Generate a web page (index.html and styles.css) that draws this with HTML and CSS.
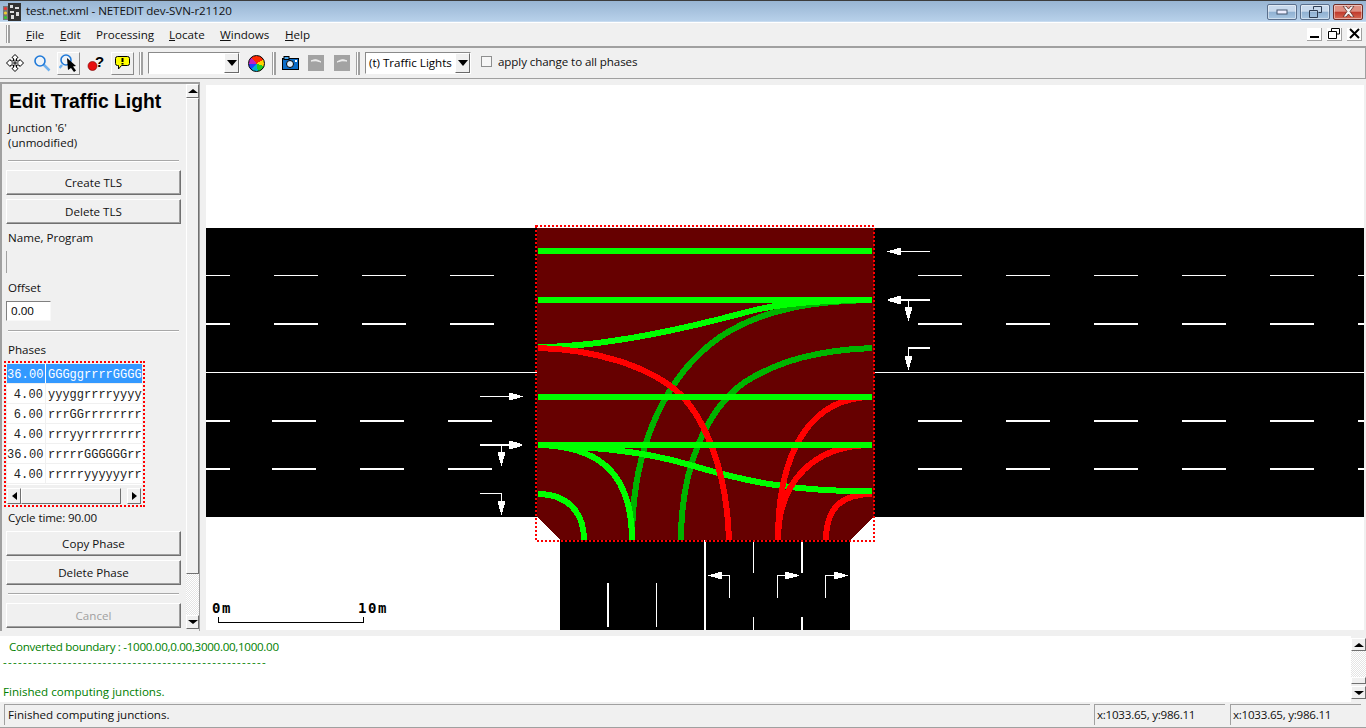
FILE: index.html
```html
<!DOCTYPE html>
<html lang="en">
<head>
<meta charset="utf-8">
<title>test.net.xml - NETEDIT dev-SVN-r21120</title>
<link rel="stylesheet" href="styles.css">
</head>
<body>
<div class="app">
  <header class="titlebar">
    <svg class="appicon" width="18" height="18" viewBox="0 0 18 18">
      <rect x="5" y="0" width="13" height="18" class="ai-dark"/>
      <path d="M7 2h3v3h-3zM12 4h4v2h-4zM7 8h4v2h-4zM13 9h3v4h-3zM8 12h3v4h-3z" class="ai-light"/>
      <rect x="0" y="3" width="5" height="14" class="ai-pole"/>
      <circle cx="2.5" cy="5.5" r="1.6" class="ai-r"/>
      <circle cx="2.5" cy="10" r="1.6" class="ai-y"/>
      <circle cx="2.5" cy="14.5" r="1.6" class="ai-g"/>
    </svg>
    <span class="titletext">test.net.xml - NETEDIT dev-SVN-r21120</span>
    <div class="wincontrols">
      <div class="winbtn"><svg width="12" height="6" viewBox="0 0 12 6"><rect x="1" y="1" width="10" height="4" class="wi-fill"/></svg></div>
      <div class="winbtn"><svg width="13" height="12" viewBox="0 0 13 12"><path d="M4.5 3.5v-3h8v6h-3M.5 4.500h8v7h-8z" class="wi-line"/></svg></div>
      <div class="winbtn close"><svg width="15" height="11" viewBox="0 0 15 11"><path d="M2 0h3l2.500 3 2.500-3h3l-4 5.500 4 5.500h-3l-2.500-3-2.500 3h-3l4-5.500z" class="wi-x"/></svg></div>
    </div>
  </header>

  <nav class="menubar">
    <span class="grip grip-menu"></span>
    <span class="menu m-file"><u>F</u>ile</span>
    <span class="menu m-edit"><u>E</u>dit</span>
    <span class="menu m-proc">Processing</span>
    <span class="menu m-loc"><u>L</u>ocate</span>
    <span class="menu m-win"><u>W</u>indows</span>
    <span class="menu m-help"><u>H</u>elp</span>
    <div class="mdi">
      <div class="mdibtn"><svg width="11" height="11" viewBox="0 0 11 11"><rect x="1" y="8" width="9" height="2"/></svg></div>
      <div class="mdibtn"><svg width="12" height="11" viewBox="0 0 12 11"><path d="M3.500 3v-2.500h8v5.500h-3M.5 3.500h8v7h-8z" class="mi-line"/></svg></div>
      <div class="mdibtn"><svg width="11" height="11" viewBox="0 0 11 11"><path d="M1 1l9 9M10 1l-9 9" class="mi-x"/></svg></div>
    </div>
  </nav>

  <div class="toolbar">
    <div class="tool">
      <svg width="18" height="18" viewBox="0 0 18 18"><path d="M9 .5l3 3-1.500 1v2.500l2.500 0 1-1.500 3.500 3.500-3.500 3.500-1-1.500h-2.500v2.500l1.500 1-3 3-3-3 1.500-1v-2.500h-2.500l-1 1.500-3.500-3.500 3.500-3.500 1 1.500h2.500v-2.500l-1.500-1z" class="ic-move"/><path d="M9 5.500v7M5.500 9h7" class="ic-movein"/></svg>
    </div>
    <div class="tool">
      <svg width="18" height="18" viewBox="0 0 18 18"><line x1="10.500" y1="10.500" x2="16.500" y2="16.500" class="ic-handle"/><circle cx="7" cy="7" r="5" class="ic-lens"/></svg>
    </div>
    <div class="tool raised">
      <svg width="19" height="19" viewBox="0 0 19 19"><line x1="3" y1="11" x2="0.500" y2="14" class="ic-handle"/><circle cx="7" cy="6" r="5" class="ic-lens"/><path d="M8 4l9 8-3 .5 3 4-2 1.500-3-4-3 2z" class="ic-cursor"/></svg>
    </div>
    <div class="tool">
      <svg width="18" height="16" viewBox="0 0 18 16"><circle cx="5.500" cy="11" r="4.500" class="ic-bomb"/><text x="8" y="11.500" class="ic-q">?</text></svg>
    </div>
    <div class="tool raised">
      <svg width="15" height="14" viewBox="0 0 15 14"><path d="M2.500 .5h10a2 2 0 0 1 2 2v5a2 2 0 0 1-2 2h-6l-3 3.500v-3.500h-1a2 2 0 0 1-2-2v-5a2 2 0 0 1 2-2z" class="ic-bubble"/><rect x="6.500" y="2" width="2" height="4"/><rect x="6.500" y="7" width="2" height="1.500"/></svg>
    </div>
    <span class="grip grip-a"></span>
    <div class="combo combo-a"><span class="combo-text"></span><span class="combo-btn"><i class="tri"></i></span></div>
    <div class="tool tool-wheel"><span class="wheel"></span></div>
    <span class="grip grip-b"></span>
    <div class="tool tool-cam">
      <svg width="17" height="14" viewBox="0 0 17 14"><rect x=".5" y="2.500" width="16" height="11" class="ic-cam"/><rect x="2" y="0.500" width="5" height="3" class="ic-cam2"/><circle cx="8" cy="8" r="3.500" class="ic-camlens"/><rect x="13" y="4" width="2" height="2" class="ic-camdot"/></svg>
    </div>
    <div class="tool tool-g1"><svg width="16" height="16" viewBox="0 0 16 16"><rect width="16" height="16" class="ic-gray"/><path d="M3 6q5-3 10 1q-5-2-10-1z" class="ic-arc"/></svg></div>
    <div class="tool tool-g2"><svg width="16" height="16" viewBox="0 0 16 16"><rect width="16" height="16" class="ic-gray"/><path d="M3 7q5-4 10-1q-5-1-10 1z" class="ic-arc"/></svg></div>
    <span class="grip grip-c"></span>
    <div class="combo combo-b"><span class="combo-text">(t) Traffic Lights</span><span class="combo-btn"><i class="tri"></i></span></div>
    <span class="check"></span>
    <span class="checklabel">apply change to all phases</span>
  </div>

  <main class="main">
    <aside class="panel">
      <div class="panel-body">
        <h1 class="ptitle">Edit Traffic Light</h1>
        <div class="ptext t-junction">Junction '6'</div>
        <div class="ptext">(unmodified)</div>
        <div class="psep s-1"></div>
        <div class="btn b-create">Create TLS</div>
        <div class="btn b-next">Delete TLS</div>
        <div class="ptext t-name">Name, Program</div>
        <div class="thininput"></div>
        <div class="ptext t-offset">Offset</div>
        <div class="offset">0.00</div>
        <div class="psep s-2"></div>
        <div class="ptext t-phases">Phases</div>
        <div class="phases">
          <div class="ptable">
            <div class="prow sel"><span class="pt">36.00</span><span class="ps">GGGggrrrrGGGGG</span></div>
            <div class="prow"><span class="pt">4.00</span><span class="ps">yyyggrrrryyyyy</span></div>
            <div class="prow"><span class="pt">6.00</span><span class="ps">rrrGGrrrrrrrrr</span></div>
            <div class="prow"><span class="pt">4.00</span><span class="ps">rrryyrrrrrrrrr</span></div>
            <div class="prow"><span class="pt">36.00</span><span class="ps">rrrrrGGGGGGrrr</span></div>
            <div class="prow"><span class="pt">4.00</span><span class="ps">rrrrryyyyyyrrr</span></div>
          </div>
          <div class="hscroll">
            <span class="sbtn"><i class="tri-l"></i></span>
            <span class="hthumb"></span>
            <span class="sbtn sbtn-r"><i class="tri-r"></i></span>
          </div>
        </div>
        <div class="ptext t-cycle">Cycle time: 90.00</div>
        <div class="btn b-copy">Copy Phase</div>
        <div class="btn b-next">Delete Phase</div>
        <div class="psep s-3"></div>
        <div class="btn b-cancel">Cancel</div>
      </div>
      <div class="vscroll">
        <span class="sbtn vbtn"><i class="tri-u"></i></span>
        <span class="vthumb"></span>
        <span class="vtrack"></span>
        <span class="sbtn vbtn"><i class="tri-d"></i></span>
      </div>
    </aside>

    <div class="canvas">
      <svg class="net" width="1158" height="545" viewBox="206 85 1158 545">
        <rect x="206" y="228" width="1158" height="289" class="road"/>
        <rect x="560" y="517" width="290" height="113" class="road"/>

        <g class="mark">
          <rect x="206" y="372" width="1158" height="1"/>
          <path d="M206 275h24v1h-24zM274 275h44v1h-44zM362 275h44v1h-44zM450 275h44v1h-44z"/>
          <path d="M206 323h24v2h-24zM274 323h44v2h-44zM362 323h44v2h-44zM450 323h44v2h-44z"/>
          <path d="M206 420h24v2h-24zM272 420h44v2h-44zM360 420h44v2h-44zM448 420h44v2h-44z"/>
          <path d="M206 468h24v2h-24zM272 468h44v2h-44zM360 468h44v2h-44zM448 468h44v2h-44z"/>
          <path d="M918 275h44v1h-44zM1006 275h44v1h-44zM1094 275h44v1h-44zM1182 275h44v1h-44zM1270 275h44v1h-44zM1358 275h6v1h-6z"/>
          <path d="M918 323h44v2h-44zM1006 323h44v2h-44zM1094 323h44v2h-44zM1182 323h44v2h-44zM1270 323h44v2h-44zM1358 323h6v2h-6z"/>
          <path d="M918 420h44v2h-44zM1006 420h44v2h-44zM1094 420h44v2h-44zM1182 420h44v2h-44zM1270 420h44v2h-44zM1358 420h6v2h-6z"/>
          <path d="M918 468h44v2h-44zM1006 468h44v2h-44zM1094 468h44v2h-44zM1182 468h44v2h-44zM1270 468h44v2h-44zM1358 468h6v2h-6z"/>
          <rect x="704" y="539" width="2" height="91"/>
          <rect x="607" y="583" width="2" height="44"/>
          <rect x="656" y="583" width="1" height="44"/>
          <path d="M753 539h1v34h-1zM753 617h1v13h-1zM801 539h2v34h-2zM801 617h2v13h-2z"/>
        </g>

        <polygon points="537,228 874,228 874,517 850,540 560,540 537,517" class="junction"/>

        <g class="lane">
          <path class="dg" d="M872 300C820 301 765 307 720 337C670 372 632 440 632 540"/>
          <path class="dg" d="M872 348C820 350 780 360 745 382C705 410 681 470 681 540"/>
          <path class="rd" d="M872 494C845 494 826 505 826 540"/>
          <path class="lg" d="M538 445C590 446 632 465 632 540"/>
          <path class="lg" d="M538 347C600 347 680 330 747 312C780 303 820 300 872 300"/>
          <path class="lg" d="M538 445C590 447 640 450 690 465C740 480 790 492 872 491"/>
          <path class="lg" d="M538 494C565 494 584 510 584 540"/>
          <path class="rd" d="M538 348C590 349 650 365 681 395C705 420 727 470 729 540"/>
          <path class="rd" d="M872 397C815 397 778 445 778 540"/>
          <path class="rd" d="M872 445C815 445 778 480 778 540"/>
          <rect x="538" y="248" width="334" height="6" class="lg-f"/>
          <rect x="538" y="297" width="334" height="6" class="lg-f"/>
          <rect x="538" y="394" width="334" height="6" class="lg-f"/>
          <rect x="538" y="442" width="334" height="6" class="lg-f"/>
        </g>

        <rect x="536" y="226" width="338" height="315" class="tlsbox"/>

        <g class="arrows">
          <rect x="480" y="396" width="43" height="1"/>
          <polygon points="509,393 513,393 513,394 520,395 520,398 513,399 513,400 509,400"/>
          <rect x="480" y="444" width="42" height="2"/>
          <polygon points="509,441 513,441 513,442 520,443 520,447 513,448 513,449 509,449"/>
          <rect x="501" y="445" width="1" height="21"/>
          <polygon points="498,452 505,452 505,456 504,456 503,463 500,463 499,456 498,456"/>
          <path d="M480 493h22v22h-1v-21h-21z"/>
          <polygon points="498,501 505,501 505,505 504,505 503,512 500,512 499,505 498,505"/>

          <rect x="887" y="251" width="43" height="1"/>
          <polygon points="901,248 897,248 897,249 890,250 890,253 897,254 897,255 901,255"/>
          <rect x="888" y="299" width="42" height="2"/>
          <polygon points="901,296 897,296 897,297 890,298 890,302 897,303 897,304 901,304"/>
          <rect x="908" y="300" width="1" height="21"/>
          <polygon points="905,307 912,307 912,311 911,311 910,318 907,318 906,311 905,311"/>
          <path d="M908 347h22v2h-21v21h-1z"/>
          <polygon points="905,356 912,356 912,360 911,360 910,367 907,367 906,360 905,360"/>

          <path d="M708 575h22v23h-1v-22h-21z"/>
          <polygon points="722,572 718,572 718,573 711,574 711,577 718,578 718,579 722,579"/>
          <path d="M777 575h22v1h-21v22h-1z"/>
          <polygon points="785,572 789,572 789,573 797,574 797,577 789,578 789,579 785,579"/>
          <path d="M825 575h23v1h-22v22h-1z"/>
          <polygon points="834,572 838,572 838,573 845,574 845,577 838,578 838,579 834,579"/>
        </g>

        <path d="M218.500 617v5.500h145v-5.500" class="scale"/>
        <text x="212" y="613" class="scaletext">0m</text>
        <text x="358" y="613" class="scaletext">10m</text>
      </svg>
    </div>
  </main>

  <section class="log">
    <div class="logtext">
      <div class="logline indent">Converted boundary : -1000.00,0.00,3000.00,1000.00</div>
      <div class="logline dashes">-----------------------------------------------------</div>
      <div class="logline">&nbsp;</div>
      <div class="logline">Finished computing junctions.</div>
    </div>
    <div class="logscroll">
      <span class="sbtn lbtn"><i class="tri-u"></i></span>
      <span class="ltrack"></span>
      <span class="lthumb"></span>
      <span class="sbtn lbtn"><i class="tri-d"></i></span>
    </div>
  </section>

  <footer class="statusbar">
    <div class="pane pane-main">Finished computing junctions.</div>
    <div class="pane pane-a">x:1033.65, y:986.11</div>
    <div class="pane pane-b">x:1033.65, y:986.11</div>
  </footer>
</div>
</body>
</html>
```
FILE: styles.css
```css
* { box-sizing: border-box; }
html, body { margin: 0; padding: 0; }
body { background: #f0f0f0; font-family: "Open Sans", "Noto Sans", sans-serif; font-size: 11.6px; color: #000; overflow: hidden; }
.app { width: 1366px; height: 728px; display: flex; flex-direction: column; overflow: hidden; }

/* title bar */
.titlebar { height: 22px; display: flex; align-items: center; padding-left: 3px; border-top: 1px solid #3c3c3c; background: linear-gradient(#98b5d3, #b9d2eb); box-shadow: inset 0 -1px 0 #c8dcf0; }
.appicon { flex: none; }
.ai-dark { fill: #333; } .ai-light { fill: #ddd; } .ai-pole { fill: #777; }
.ai-r { fill: #e33; } .ai-y { fill: #ec3; } .ai-g { fill: #3c3; }
.titletext { margin: 0 0 2px 5px; font-size: 11.6px; letter-spacing: -.1px; color: #111; white-space: nowrap; }
.wincontrols { margin-left: auto; display: flex; gap: 3px; padding-right: 3px; height: 16px; }
.winbtn { width: 30px; height: 16px; border: 1px solid #5a6f8c; border-radius: 2px; display: flex; align-items: center; justify-content: center; background: linear-gradient(#c8d9ec 0 45%, #8fb0d1 50%, #a8c6e2); box-shadow: inset 0 0 0 1px rgba(255,255,255,.45); }
.winbtn.close { border-color: #6e2e28; background: linear-gradient(#de8f82 0 45%, #c0392b 50%, #d66a55); }
.wi-fill { fill: #eef; stroke: #45566f; stroke-width: 1; }
.wi-line { fill: none; stroke: #2f3d52; stroke-width: 1; }
.wi-x { fill: #f4f4f4; stroke: #5c2a25; stroke-width: .8; }

/* menu bar */
.menubar { height: 24px; display: flex; align-items: center; padding-left: 6px; box-shadow: inset 0 1px 0 #fff; }
.grip { display: block; width: 4px; border-left: 1px solid #a0a0a0; border-right: 2px solid #a0a0a0; background: #fff; flex: none; }
.grip-menu { height: 18px; margin-right: 16px; }
.menu { white-space: nowrap; color: #111; margin-top: 1px; flex: none; }
.m-file { width: 34px; } .m-edit { width: 36px; } .m-proc { width: 73px; } .m-loc { width: 51px; } .m-win { width: 65px; }
.mdi { margin-left: auto; display: flex; gap: 5px; padding-right: 4px; }
.mdibtn { width: 15px; height: 13px; display: flex; align-items: center; justify-content: center; background: #fff; border-right: 1px solid #a0a0a0; border-bottom: 1px solid #a0a0a0; }
.mi-line { fill: none; stroke: #000; stroke-width: 1; }
.mi-x { stroke: #000; stroke-width: 2; fill: none; }

/* tool bar */
.toolbar { height: 33px; display: flex; align-items: center; padding-left: 3px; border-top: 2px solid #a0a0a0; border-bottom: 1px solid #a0a0a0; border-right: 1px solid #a0a0a0; }
.tool { width: 23px; height: 23px; margin-right: 4px; display: flex; align-items: center; justify-content: center; flex: none; }
.tool.raised { border: 1px solid; border-color: #fff #8a8a8a #8a8a8a #fff; }
.grip-a { height: 23px; margin-left: 1px; }
.grip-b { height: 23px; }
.grip-c { height: 23px; }
.combo { height: 22px; display: flex; background: #fff; border: 1px solid; border-color: #8a8a8a #fff #fff #8a8a8a; flex: none; }
.combo-a { width: 92px; margin-left: 5px; }
.combo-b { width: 106px; margin-left: 5px; }
.combo-text { flex: 1; padding: 2px 0 0 3px; white-space: nowrap; overflow: hidden; }
.combo-btn { width: 15px; display: flex; align-items: center; justify-content: center; background: #f0f0f0; border: 1px solid; border-color: #fff #6a6a6a #6a6a6a #fff; }
.tri { width: 0; height: 0; border: 5px solid transparent; border-top: 6px solid #000; border-bottom: 0; }
.tool-wheel { margin-left: 5px; margin-right: 4px; }
.wheel { display: block; width: 17px; height: 17px; border-radius: 50%; border: 1px solid #000; background: conic-gradient(#ff2a00 0 60deg, #ffd400 60deg 110deg, #22cc22 110deg 170deg, #00b0d0 170deg 220deg, #2040ff 220deg 270deg, #c020c0 270deg 320deg, #ff2a00 320deg); }
.tool-cam { margin-left: 3px; margin-right: 2px; }
.tool-g1 { margin-right: 3px; }
.tool-g2 { margin-right: 3px; }
.ic-move { fill: #fff; stroke: #000; stroke-width: 1; }
.ic-movein { fill: none; stroke: #000; stroke-width: 1; }
.ic-handle { stroke: #6fb0ee; stroke-width: 2.5; }
.ic-lens { fill: #eef3f8; stroke: #1f79d8; stroke-width: 1.6; }
.ic-cursor { fill: #000; }
.ic-bomb { fill: #e81010; stroke: #700; stroke-width: .6; }
.ic-q { font-family: "Liberation Sans", sans-serif; font-weight: 700; font-size: 15px; fill: #000; }
.ic-bubble { fill: #ffff00; stroke: #000; stroke-width: 1; }
.ic-cam { fill: #0a6cc8; stroke: #000; stroke-width: 1; }
.ic-cam2 { fill: #4aa8ee; stroke: #000; stroke-width: 1; }
.ic-camlens { fill: #dff0ff; stroke: #000; stroke-width: 1; }
.ic-camdot { fill: #fff; }
.ic-gray { fill: #a3a3a3; }
.ic-arc { fill: #eee; stroke: #eee; stroke-width: 1; }
.check { width: 11px; height: 11px; margin-left: 10px; border: 1px solid #8e8f8f; background: #f6f6f6; flex: none; margin-top: -3px; }
.checklabel { margin-left: 6px; white-space: nowrap; margin-top: -3px; color: #111; letter-spacing: -.1px; }

/* main */
.main { height: 557px; display: flex; align-items: flex-start; padding-top: 3px; flex: none; }
.panel { width: 200px; height: 549px; display: flex; border-top: 2px solid #a0a0a0; border-left: 2px solid #a0a0a0; border-right: 1px solid #a0a0a0; flex: none; }
.panel-body { width: 184px; padding-left: 4px; flex: none; }
.ptitle { margin: 6px 0 0 3px; font-family: "Liberation Sans", sans-serif; font-size: 19.3px; line-height: 24px; font-weight: 700; white-space: nowrap; }
.ptext { line-height: 15px; padding-left: 2px; white-space: nowrap; color: #111; }
.t-junction { margin-top: 6px; }
.psep { width: 171px; height: 2px; margin-left: 2px; background: #a8a8a8; border-bottom: 1px solid #fff; }
.s-1 { margin-top: 10px; }
.s-2 { margin-top: 9px; }
.s-3 { margin-top: 8px; }
.btn { width: 175px; height: 25px; line-height: 23px; text-align: center; background: #f0f0f0; border: 1px solid; border-color: #fff #707070 #707070 #fff; box-shadow: inset -1px -1px 0 #a0a0a0; color: #111; }
.b-create { margin-top: 8px; }
.b-next { margin-top: 4px; }
.t-name { margin-top: 6px; }
.thininput { width: 1px; height: 22px; margin-top: 6px; background: #a0a0a0; }
.t-offset { margin-top: 7px; }
.offset { width: 45px; height: 20px; margin-top: 6px; padding-left: 4px; line-height: 18px; background: #fff; border: 1px solid; border-color: #808080 #f8f8f8 #f8f8f8 #808080; }
.t-phases { margin-top: 10px; }
.phases { width: 141px; height: 146px; margin: 4px 0 0 -2px; padding: 3px; background:
  repeating-linear-gradient(90deg, #f00 0 2px, transparent 2px 4px) 0 0 / 100% 2px no-repeat,
  repeating-linear-gradient(90deg, #f00 0 2px, transparent 2px 4px) 0 100% / 100% 2px no-repeat,
  repeating-linear-gradient(0deg, #f00 0 2px, transparent 2px 4px) 0 0 / 2px 100% no-repeat,
  repeating-linear-gradient(0deg, #f00 0 2px, transparent 2px 4px) 100% 0 / 2px 100% no-repeat; }
.ptable { height: 121px; background: #fff; }
.prow { height: 20px; display: flex; font-family: "Liberation Mono", monospace; font-size: 12px; line-height: 23px; border-bottom: 1px solid #f0f0f0; color: #222; }
.pt { width: 39px; padding-right: 2px; text-align: right; border-right: 1px solid #f0f0f0; flex: none; letter-spacing: .1px; }
.ps { padding-left: 2px; overflow: hidden; white-space: nowrap; flex: 1; }
.prow.sel { color: #fff; }
.prow.sel .pt, .prow.sel .ps { background: #3399ff; }
.prow.sel .pt { border-right-color: #fff; }
.hscroll { height: 16px; margin-top: 3px; display: flex; }
.sbtn { display: flex; align-items: center; justify-content: center; background: #f0f0f0; border: 1px solid; border-color: #fff #707070 #707070 #fff; flex: none; }
.hscroll .sbtn { width: 14px; }
.sbtn-r { margin-left: 6px; }
.hthumb { width: 100px; background: #f0f0f0; border: 1px solid; border-color: #fff #707070 #707070 #fff; }
.tri-l { border: 4px solid transparent; border-right: 5px solid #000; border-left: 0; }
.tri-r { border: 4px solid transparent; border-left: 5px solid #000; border-right: 0; }
.tri-u { border: 5px solid transparent; border-bottom: 4px solid #000; border-top: 0; }
.tri-d { border: 5px solid transparent; border-top: 4px solid #000; border-bottom: 0; }
.t-cycle { margin-top: 3px; letter-spacing: -.12px; }
.b-copy { margin-top: 6px; }
.b-cancel { margin-top: 8px; color: #a0a0a0; }
.vscroll { width: 13px; display: flex; flex-direction: column; flex: none; }
.vbtn { height: 14px; }
.vthumb { height: 476px; background: #f0f0f0; border: 1px solid; border-color: #fff #707070 #707070 #fff; }
.vtrack { height: 41px; background: repeating-conic-gradient(#e4e4e4 0 25%, #fff 0 50%) 0 0 / 2px 2px; }
.canvas { width: 1158px; height: 545px; margin: 3px 0 0 6px; background: #fff; flex: none; overflow: hidden; }
.net { display: block; shape-rendering: crispEdges; }
.road { fill: #000; }
.mark { fill: #fff; }
.junction { fill: #660000; }
.lane path { fill: none; stroke-width: 6; }
.dg { stroke: #00b300; }
.lg { stroke: #00ff00; }
.rd { stroke: #ff0000; }
.lg-f { fill: #00ff00; }
.tlsbox { fill: none; stroke: #ff0000; stroke-width: 2; stroke-dasharray: 2 2; }
.arrows { fill: #fff; }
.scale { fill: none; stroke: #000; stroke-width: 1; }
.scaletext { font-family: "DejaVu Sans Mono", monospace; font-weight: 700; font-size: 14px; letter-spacing: 1.6px; fill: #000; }

/* log */
.log { height: 66px; display: flex; flex: none; }
.logtext { width: 1351px; height: 66px; background: #fff; padding: 3px 0 0 3px; overflow: hidden; color: #008000; flex: none; }
.logline { line-height: 15px; white-space: nowrap; }
.indent { padding-left: 6px; letter-spacing: -.3px; }
.dashes { letter-spacing: 1.25px; }
.logscroll { width: 15px; display: flex; flex-direction: column; flex: none; }
.lbtn { height: 13px; margin-top: 2px; }
.ltrack { height: 26px; background: repeating-conic-gradient(#e4e4e4 0 25%, #fff 0 50%) 0 0 / 2px 2px; }
.lthumb { height: 7px; border: 1px solid; border-color: #fff #707070 #707070 #fff; background: #f0f0f0; }

/* status */
.statusbar { height: 26px; display: flex; padding: 2px 0 0 4px; border-bottom: 1px solid #a0a0a0; }
.pane { height: 21px; line-height: 20px; padding-left: 3px; border-top: 1px solid #a0a0a0; border-left: 1px solid #a0a0a0; white-space: nowrap; flex: none; color: #111; }
.pane-main { width: 1086px; }
.pane-a { width: 131px; margin-left: 4px; padding-left: 2px; letter-spacing: -.25px; }
.pane-b { width: 131px; margin-left: 5px; padding-left: 2px; letter-spacing: -.25px; }
```
